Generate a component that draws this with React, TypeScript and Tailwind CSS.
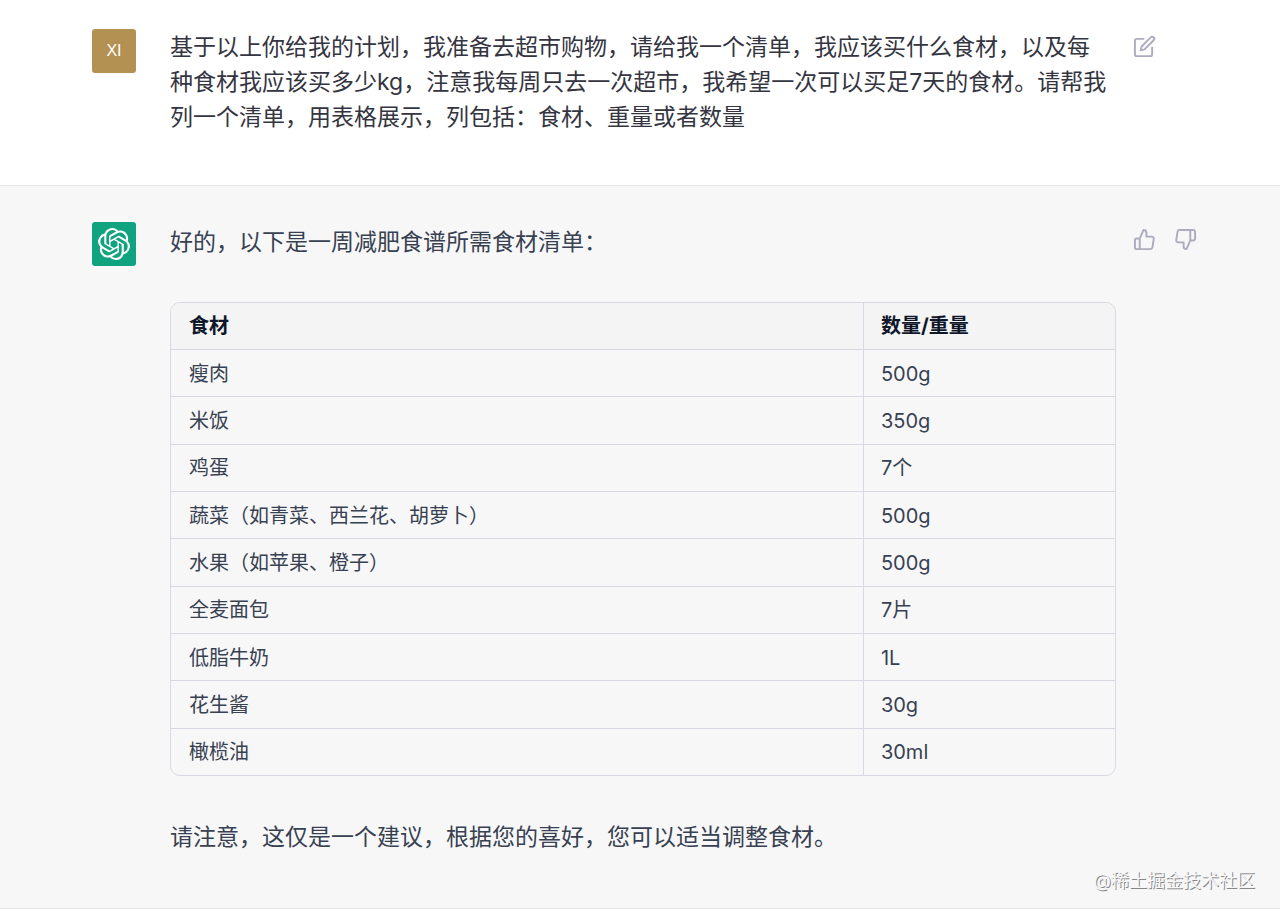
import type React from "react";
import { FiEdit, FiThumbsDown, FiThumbsUp } from "react-icons/fi";
import { SiOpenai } from "react-icons/si";

type Ingredient = {
  name: string;
  amount: string;
};

const ingredients: Ingredient[] = [
  { name: "瘦肉", amount: "500g" },
  { name: "米饭", amount: "350g" },
  { name: "鸡蛋", amount: "7个" },
  { name: "蔬菜（如青菜、西兰花、胡萝卜）", amount: "500g" },
  { name: "水果（如苹果、橙子）", amount: "500g" },
  { name: "全麦面包", amount: "7片" },
  { name: "低脂牛奶", amount: "1L" },
  { name: "花生酱", amount: "30g" },
  { name: "橄榄油", amount: "30ml" },
];

type MessageProps = {
  avatar: React.ReactNode;
  actions: React.ReactNode;
  className: string;
  children: React.ReactNode;
};

const Message: React.FC<MessageProps> = ({
  avatar,
  actions,
  className,
  children,
}) => (
  <section className={className}>
    <div className="flex items-start pr-[84px] pl-[92px]">
      {avatar}
      <div className="ml-[34px] min-w-0 flex-1 text-[23px] leading-[35px]">
        {children}
      </div>
      <div className="ml-[17px] flex w-[63px] shrink-0 gap-[18px] pt-[6px] text-[#acacbe]">
        {actions}
      </div>
    </div>
  </section>
);

const IngredientTable: React.FC = () => (
  <table className="mt-[42px] h-[474px] w-full table-fixed border-separate border-spacing-0 rounded-[10px] border border-[#d9d9e3] text-left text-[20px] leading-[30px]">
    <thead className="text-[#0f172a]">
      <tr>
        <th className="h-[46px] w-[73.4%] rounded-tl-[9px] border-r border-[#d9d9e3] bg-[#f4f4f5] px-[18px] font-bold">
          食材
        </th>
        <th className="h-[46px] rounded-tr-[9px] bg-[#f4f4f5] px-[17px] font-bold">
          数量/重量
        </th>
      </tr>
    </thead>
    <tbody>
      {ingredients.map(({ name, amount }) => (
        <tr key={name}>
          <td className="border-t border-r border-[#d9d9e3] px-[18px] pt-px">
            {name}
          </td>
          <td className="border-t border-[#d9d9e3] px-[17px] pt-px">
            {amount}
          </td>
        </tr>
      ))}
    </tbody>
  </table>
);

const App: React.FC = () => (
  <main className="relative bg-white font-['Inter','Noto_Sans_CJK_SC',sans-serif]">
    <Message
      className="border-b border-[#e6e6e7] pt-[29px] pb-[50px] text-[#343541]"
      avatar={
        <div className="flex size-[44px] shrink-0 items-center justify-center rounded-[3px] bg-[#b39152] font-['Liberation_Sans',sans-serif] text-[16px] text-white">
          XI
        </div>
      }
      actions={
        <button type="button" aria-label="编辑">
          <FiEdit size={23} />
        </button>
      }
    >
      <p className="pt-px pr-[6px]">
        基于以上你给我的计划，我准备去超市购物，请给我一个清单，我应该买什么食材，以及每种食材我应该买多少kg，注意我每周只去一次超市，我希望一次可以买足7天的食材。请帮我列一个清单，用表格展示，列包括：食材、重量或者数量
      </p>
    </Message>
    <Message
      className="border-b border-[#e6e6e7] bg-[#f7f7f8] pt-[36px] pb-[53px] text-[#374151]"
      avatar={
        <div className="flex size-[44px] shrink-0 items-center justify-center rounded-[3px] bg-[#10a37f] text-white">
          <SiOpenai size={32} />
        </div>
      }
      actions={
        <>
          <button type="button" aria-label="赞">
            <FiThumbsUp size={23} />
          </button>
          <button type="button" aria-label="踩">
            <FiThumbsDown size={23} />
          </button>
        </>
      }
    >
      <p className="pt-[3px]">好的，以下是一周减肥食谱所需食材清单：</p>
      <IngredientTable />
      <p className="mt-[44px]">
        请注意，这仅是一个建议，根据您的喜好，您可以适当调整食材。
      </p>
    </Message>
    <span className="absolute right-[25px] bottom-[15px] text-[18px] leading-[27px] text-[#f7f7f8] [text-shadow:1px_1px_0_#888]">
      @稀土掘金技术社区
    </span>
  </main>
);

export default App;
